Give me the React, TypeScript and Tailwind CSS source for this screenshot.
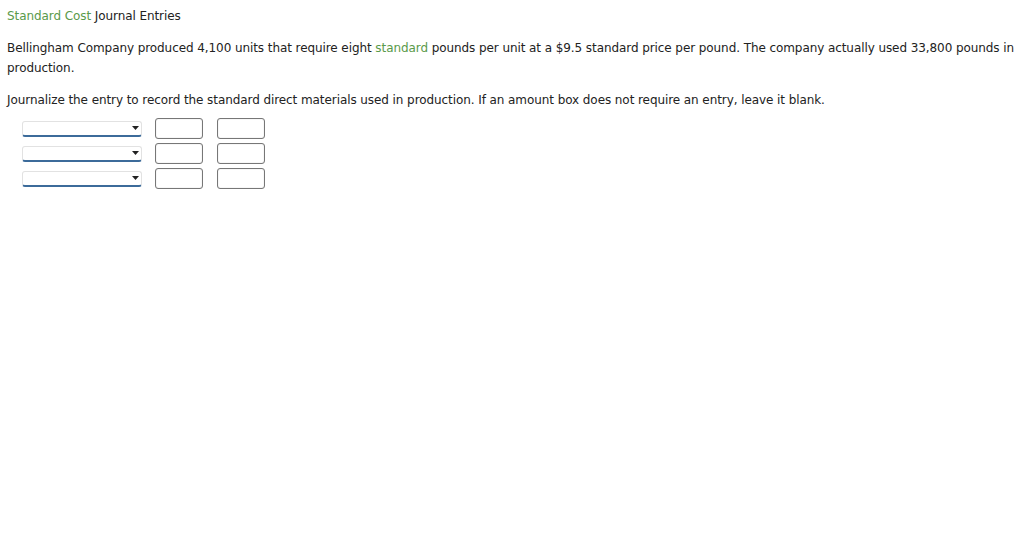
import React from "react";

function Row() {
  return (
    <div className="flex items-center h-[25px]">
      <div className="relative w-[120px] h-[16px] ml-[15px] mr-[13px] rounded-[3px] border border-[#e2e2e2] border-b-2 border-b-[#3c6b9a] bg-white">
        <svg className="absolute right-[2px] top-[4px]" width="7" height="4" viewBox="0 0 7 4">
          <polygon points="0,0 7,0 3.5,4" fill="#222" />
        </svg>
      </div>
      <div className="w-[48px] h-[21px] rounded-[3px] border border-[#777] shadow-[inset_0_0_1px_#aaa] bg-white mr-[14px]" />
      <div className="w-[48px] h-[21px] rounded-[3px] border border-[#777] shadow-[inset_0_0_1px_#aaa] bg-white" />
    </div>
  );
}

export default function App() {
  return (
    <div className="bg-white min-h-[533px] px-[7px] pt-[6px] text-[12px] tracking-[-0.08px] leading-[20px] text-[#222]" style={{ fontFamily: '"DejaVu Sans", Verdana, sans-serif' }}>
      <div>
        <span className="text-[#5a9a4a]">Standard Cost</span> Journal Entries
      </div>
      <p className="mt-[12px]">
        Bellingham Company produced 4,100 units that require eight <span className="text-[#5a9a4a]">standard</span> pounds per unit at a $9.5 standard price per pound. The company actually used 33,800 pounds in production.
      </p>
      <p className="mt-[12px]">
        Journalize the entry to record the standard direct materials used in production. If an amount box does not require an entry, leave it blank.
      </p>
      <div className="mt-[6px]">
        <Row />
        <Row />
        <Row />
      </div>
    </div>
  );
}
